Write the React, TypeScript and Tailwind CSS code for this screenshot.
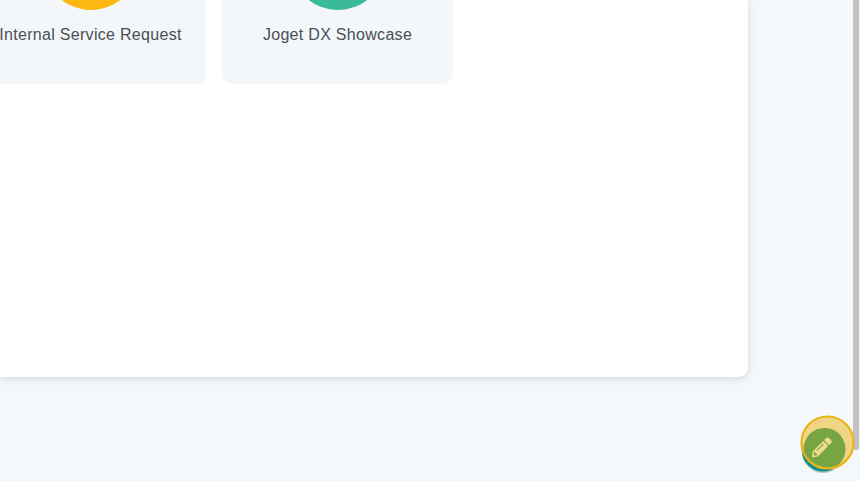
type AppCardProps = { name: string; dot: string };

function AppCard({ name, dot }: AppCardProps) {
  return (
    <div className="flex h-[84px] w-[231px] shrink-0 flex-col items-center overflow-hidden rounded-b-[10px] bg-[#f4f7fa]">
      <div className={`-mt-[86px] size-24 shrink-0 rounded-full ${dot}`} />
      <div className="mt-[13px] whitespace-nowrap text-[16px] leading-6 tracking-[0.3px] text-[#494e54]">{name}</div>
    </div>
  );
}

function EditButton() {
  return (
    <div className="absolute left-[800px] top-[415px] size-[56px]">
      <svg width="56" height="60" viewBox="0 0 56 60" fill="none">
        <circle cx="23" cy="37" r="21" fill="#526b78" opacity="0.35" />
        <circle cx="23" cy="35.3" r="21.2" fill="#0d8f8c" />
        <circle cx="27.5" cy="27.5" r="26" fill="#f0d684" />
        <path
          d="M4.2 39.3A21 21 0 1 1 37.5 50.5A26 26 0 0 1 4.2 39.3Z"
          fill="#78a544"
        />
        <g transform="translate(12 22.5) scale(.0385)" fill="#f0dc8c">
          <path d="M497.9 142.1l-46.1 46.1c-4.7 4.7-12.3 4.7-17 0l-111-111c-4.7-4.7-4.7-12.3 0-17l46.1-46.1c18.7-18.7 49.1-18.7 67.9 0l60.1 60.1c18.8 18.7 18.8 49.1 0 68zM284.2 99.8L21.6 362.4.4 483.9c-2.9 16.4 11.4 30.6 27.8 27.8l121.5-21.3 262.6-262.6c4.7-4.7 4.7-12.3 0-17l-111-111c-4.8-4.7-12.4-4.7-17.1 0zM124.1 339.9c-5.5-5.5-5.5-14.3 0-19.8l154-154c5.5-5.5 14.3-5.5 19.8 0s5.5 14.3 0 19.8l-154 154c-5.5 5.5-14.3 5.5-19.8 0zM88 424h48v36.3l-64.5 11.3-31.1-31.1L51.7 376H88v48z" />
        </g>
        <circle cx="27.5" cy="27.5" r="26" stroke="#e9b51b" strokeWidth="2.2" />
      </svg>
    </div>
  );
}

export default function App() {
  return (
    <div className="relative flex h-[481px] w-[860px] items-start justify-between overflow-hidden bg-[#f4f8fb] font-['Liberation_Sans',sans-serif]">
      <main className="h-[377px] w-[748px] rounded-br-[10px] bg-white shadow-[0_2px_8px_rgba(0,0,0,0.13)]">
        <div className="-ml-[25px] flex gap-4">
          <AppCard name="Internal Service Request" dot="bg-[#fdb813]" />
          <AppCard name="Joget DX Showcase" dot="bg-[#3aba9b]" />
        </div>
      </main>
      <div className="mr-px h-[450px] w-[6px] rounded-b-[3px] bg-[#c1c1c1]" />
      <EditButton />
    </div>
  );
}
